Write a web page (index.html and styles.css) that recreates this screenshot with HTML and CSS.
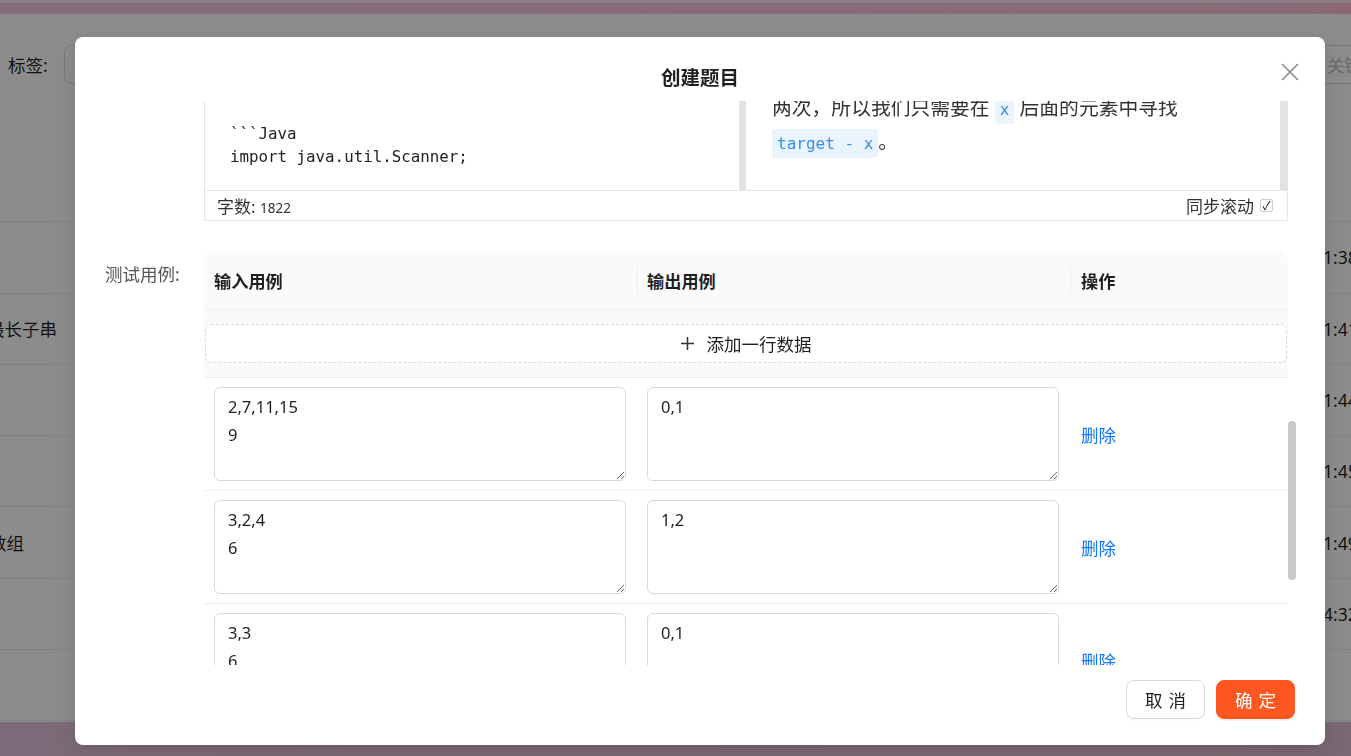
FILE: index.html
```html
<!DOCTYPE html>
<html lang="zh-CN">
<head>
<meta charset="utf-8">
<title>创建题目</title>
<link rel="stylesheet" href="styles.css">
</head>
<body>
<div class="page">
  <div class="topbar"></div>
  <div class="filters">
    <div class="filter-left">
      <span class="filter-label">标签:</span>
      <div class="filter-input"></div>
    </div>
    <div class="filter-right">
      <div class="filter-input search"><span class="placeholder">关键字搜索</span></div>
    </div>
  </div>
  <div class="bg-table">
    <div class="bg-row"></div>
    <div class="bg-row"><div class="bg-title"></div><div class="bg-time">11:38</div></div>
    <div class="bg-row"><div class="bg-title">无重复字符的最长子串</div><div class="bg-time">11:41</div></div>
    <div class="bg-row"><div class="bg-title"></div><div class="bg-time">11:44</div></div>
    <div class="bg-row"><div class="bg-title"></div><div class="bg-time">11:45</div></div>
    <div class="bg-row"><div class="bg-title short">合并有序数组</div><div class="bg-time">11:49</div></div>
    <div class="bg-row"><div class="bg-title"></div><div class="bg-time">14:32</div></div>
    <div class="bg-row"></div>
  </div>
  <div class="bottombar"></div>
</div>

<div class="mask"></div>

<div class="modal">
  <div class="modal-header">创建题目</div>
  <button class="modal-close" aria-label="关闭">
    <svg width="18" height="18" viewBox="0 0 18 18"><path d="M1.5 1.5 L16.5 16.5 M16.5 1.5 L1.5 16.5" stroke="#8c8c8c" stroke-width="1.6" fill="none" stroke-linecap="round"/></svg>
  </button>

  <div class="modal-body">
    <div class="form-item">
      <div class="form-label"></div>
      <div class="form-control">
        <div class="editor">
          <div class="editor-panes">
            <div class="pane">
              <div class="pane-content code-pane">
                <div class="code-line">```Java</div>
                <div class="code-line">import java.util.Scanner;</div>
                <div class="code-line"></div>
              </div>
              <div class="pane-bar"></div>
            </div>
            <div class="pane">
              <div class="pane-content preview-pane">
                <p class="preview-text">两次，所以我们只需要在 <code>x</code> 后面的元素中寻找 <code>target - x</code>。</p>
              </div>
              <div class="pane-bar"></div>
            </div>
          </div>
          <div class="editor-status">
            <div class="count">字数: <span class="count-num">1822</span></div>
            <div class="sync">同步滚动 <span class="sync-box">✓</span></div>
          </div>
        </div>
      </div>
    </div>

    <div class="form-item cases">
      <div class="form-label">测试用例:</div>
      <div class="form-control">
        <table class="case-table">
          <colgroup><col class="c-in"><col class="c-out"><col class="c-op"></colgroup>
          <thead>
            <tr><th>输入用例</th><th>输出用例</th><th>操作</th></tr>
          </thead>
          <tbody>
            <tr class="add-row">
              <td colspan="3">
                <button class="add-btn">
                  <svg width="13" height="13" viewBox="0 0 13 13"><path d="M6.5 0 V13 M0 6.5 H13" stroke="#333" stroke-width="1.5"/></svg>
                  <span>添加一行数据</span>
                </button>
              </td>
            </tr>
            <tr class="case-row">
              <td><textarea>2,7,11,15
9</textarea></td>
              <td><textarea>0,1</textarea></td>
              <td class="op"><a class="link">删除</a></td>
            </tr>
            <tr class="case-row">
              <td><textarea>3,2,4
6</textarea></td>
              <td><textarea>1,2</textarea></td>
              <td class="op"><a class="link">删除</a></td>
            </tr>
            <tr class="case-row">
              <td><textarea>3,3
6</textarea></td>
              <td><textarea>0,1</textarea></td>
              <td class="op"><a class="link">删除</a></td>
            </tr>
          </tbody>
        </table>
      </div>
    </div>
    <div class="scroll-thumb"></div>
  </div>

  <div class="modal-footer">
    <button class="btn"><span class="two-cn">取消</span></button>
    <button class="btn primary"><span class="two-cn">确定</span></button>
  </div>
</div>
</body>
</html>
```
FILE: styles.css
```css
* { box-sizing: border-box; }
html, body { margin: 0; padding: 0; }
body {
  width: 1351px;
  height: 756px;
  overflow: hidden;
  background: #fff;
  font-family: "Noto Sans", "Noto Sans CJK SC", sans-serif;
  color: rgba(0, 0, 0, 0.88);
}

/* ---------- background page ---------- */
.page { height: 756px; display: flex; flex-direction: column; }
.topbar {
  height: 14px;
  border-top: 3px solid #ffe6f8;
  background: linear-gradient(90deg, #f2c8e6 0%, #f7c4de 50%, #fbc0d4 100%);
}
.filters {
  height: 137px;
  padding-top: 31px;
  display: flex;
  justify-content: space-between;
  align-items: flex-start;
}
.filter-left { display: flex; align-items: center; padding-left: 8px; }
.filter-label { width: 56px; font-size: 17.5px; }
.filter-input {
  width: 220px;
  height: 39px;
  border: 1px solid #d9d9d9;
  border-radius: 8px;
  background: #fff;
}
.filter-right { width: 37px; overflow: visible; }
.filter-input.search {
  margin-left: 1px;
  padding-left: 11px;
  display: flex;
  align-items: center;
  font-size: 17.5px;
}
.placeholder { color: #bfbfbf; white-space: nowrap; }
.bg-table { display: flex; flex-direction: column; }
.bg-row {
  height: 71.3px;
  border-bottom: 1px solid #ececec;
  display: flex;
  justify-content: space-between;
  align-items: center;
  font-size: 17.5px;
}
.bg-title {
  width: 57px;
  overflow: hidden;
  display: flex;
  justify-content: flex-end;
  white-space: nowrap;
}
.bg-title.short { width: 24px; }
.bg-time { width: 38px; overflow: hidden; white-space: nowrap; }
.bottombar { flex: 1; margin-top: 1px; background: linear-gradient(90deg, #e4c2dc, #dfbdcf); }

.mask {
  position: fixed;
  inset: 0;
  background: rgba(0, 0, 0, 0.45);
}

/* ---------- modal ---------- */
.modal {
  position: fixed;
  left: 75px;
  top: 37px;
  width: 1250px;
  height: 708px;
  background: #fff;
  border-radius: 8px;
  display: flex;
  flex-direction: column;
  box-shadow: 0 6px 16px rgba(0,0,0,.08), 0 3px 6px -4px rgba(0,0,0,.12), 0 9px 28px 8px rgba(0,0,0,.05);
}
.modal-header {
  padding: 30px 0 12px;
  line-height: 22px;
  text-align: center;
  font-size: 19.5px;
  font-weight: 700;
}
.modal-close {
  position: absolute;
  top: 26px;
  right: 26px;
  width: 18px;
  height: 18px;
  padding: 0;
  border: 0;
  background: transparent;
  display: flex;
}
.modal-body {
  flex: 1;
  overflow: hidden;
  position: relative;
  padding: 0 37px 0 30px;
}
.scroll-thumb {
  position: absolute;
  right: 29px;
  top: 320px;
  width: 8px;
  height: 159px;
  border-radius: 4px;
  background: #c9c9c9;
}
.form-item { display: grid; grid-template-columns: 99px 1fr; }
.form-label { font-size: 17.5px; color: #555; line-height: 22px; padding-top: 11px; white-space: nowrap; }
.form-control { min-width: 0; }
.cases { margin-top: 31px; }

/* ---------- markdown editor ---------- */
.editor { border: 1px solid #e5e5e5; border-top: none; }
.editor-panes { display: flex; height: 89px; }
.pane { flex: 1; display: flex; overflow: hidden; }
.pane-content { flex: 1; overflow: hidden; }
.pane-bar { width: 7px; background: #e2e2e2; }
.code-pane {
  padding: 21px 0 0 25px;
  font-family: "DejaVu Sans Mono", "Liberation Mono", monospace;
  font-size: 15.8px;
  line-height: 23px;
  color: #222;
}
.code-line { height: 23px; white-space: pre; }
.preview-pane { padding-left: 26px; }
.preview-text {
  margin: -10px 0 0;
  font-size: 19.8px;
  line-height: 34px;
  color: #333;
}
.preview-text code {
  font-family: "DejaVu Sans Mono", "Liberation Mono", monospace;
  font-size: 16px;
  line-height: 1;
  color: #3a8ee8;
  background: #e9f4fe;
  padding: 5px 5px;
  border-radius: 3px;
  white-space: nowrap;
}
.editor-status {
  height: 30px;
  border-top: 1px solid #e8e8e8;
  display: flex;
  align-items: center;
  justify-content: space-between;
  padding: 0 14px 0 12px;
  font-size: 17px;
  color: #333;
}
.count-num { font-size: 13.5px; }
.sync { display: flex; align-items: center; gap: 6px; }
.sync-box {
  width: 13px;
  height: 13px;
  border: 1px solid #cfcfcf;
  border-radius: 2px;
  font-size: 12px;
  line-height: 11px;
  display: flex;
  justify-content: center;
  color: #222;
}

/* ---------- test case table ---------- */
.case-table {
  width: 1084px;
  border-collapse: separate;
  border-spacing: 0;
  table-layout: fixed;
}
.c-in, .c-out { width: 433px; }
.c-op { width: 218px; }
.case-table th {
  height: 58px;
  background: #fafafa;
  text-align: left;
  padding: 0 10px;
  font-size: 17.2px;
  font-weight: 700;
  border-bottom: 1px solid #f0f0f0;
  position: relative;
}
.case-table th:first-child { border-top-left-radius: 8px; }
.case-table th:last-child { border-top-right-radius: 8px; padding-left: 11px; }
.case-table th + th::before {
  content: "";
  position: absolute;
  left: 0;
  top: 50%;
  width: 1px;
  height: 27px;
  transform: translateY(-50%);
  background: #ededed;
}
.add-row td {
  background: #fafafa;
  padding: 14px 1px;
  border-bottom: 1px solid #f0f0f0;
}
.add-btn {
  width: 100%;
  height: 39px;
  border: 1px dashed #d9d9d9;
  border-radius: 6px;
  background: #fff;
  display: flex;
  align-items: center;
  justify-content: center;
  gap: 13px;
  font-family: inherit;
  font-size: 17.5px;
  color: rgba(0, 0, 0, 0.88);
  padding: 0;
}
.case-row td {
  padding: 9px 11px 9px 10px;
  border-bottom: 1px solid #f0f0f0;
  vertical-align: middle;
}
.case-row textarea {
  display: block;
  width: 100%;
  height: 94px;
  border: 1px solid #d9d9d9;
  border-radius: 6px;
  padding: 5px 13px;
  font-family: "Noto Sans", "Noto Sans CJK SC", sans-serif;
  font-size: 16.5px;
  line-height: 28px;
  color: rgba(0, 0, 0, 0.88);
  resize: vertical;
  outline: none;
}
.case-row td.op { padding-left: 11px; }
.link { color: #1677ff; font-size: 17.5px; cursor: pointer; }

/* ---------- footer ---------- */
.modal-footer {
  display: flex;
  justify-content: flex-end;
  gap: 11px;
  padding: 15px 30px 26px;
}
.btn {
  width: 79px;
  height: 39px;
  border: 1px solid #d9d9d9;
  border-radius: 8px;
  background: #fff;
  font-family: inherit;
  font-size: 17.5px;
  color: rgba(0, 0, 0, 0.88);
  padding: 0;
  box-shadow: 0 2px 0 rgba(0, 0, 0, 0.02);
}
.btn.primary {
  background: #ff5722;
  border-color: #ff5722;
  color: #fff;
  box-shadow: 0 2px 0 rgba(255, 87, 34, 0.1);
}
.two-cn { letter-spacing: 0.34em; margin-right: -0.34em; }
```
